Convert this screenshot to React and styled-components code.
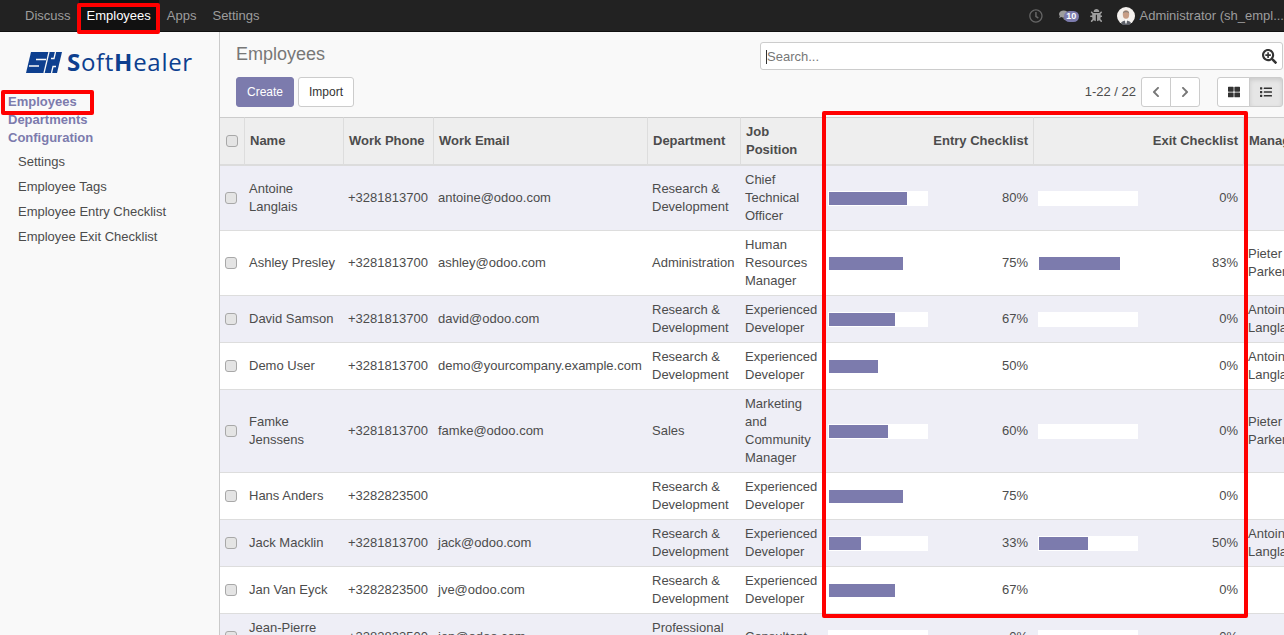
import React from 'react'
import styled, { createGlobalStyle } from 'styled-components'
import { FaRegClock, FaComments, FaBug, FaSearchPlus, FaChevronLeft, FaChevronRight, FaThLarge, FaList } from 'react-icons/fa'

const employees = [
  { name: 'Antoine Langlais', phone: '+3281813700', email: 'antoine@odoo.com', dept: 'Research & Development', job: 'Chief Technical Officer', entry: 80, exit: 0, manager: '' },
  { name: 'Ashley Presley', phone: '+3281813700', email: 'ashley@odoo.com', dept: 'Administration', job: 'Human Resources Manager', entry: 75, exit: 83, manager: 'Pieter Parker' },
  { name: 'David Samson', phone: '+3281813700', email: 'david@odoo.com', dept: 'Research & Development', job: 'Experienced Developer', entry: 67, exit: 0, manager: 'Antoine Langlais' },
  { name: 'Demo User', phone: '+3281813700', email: 'demo@yourcompany.example.com', dept: 'Research & Development', job: 'Experienced Developer', entry: 50, exit: 0, manager: 'Antoine Langlais' },
  { name: 'Famke Jenssens', phone: '+3281813700', email: 'famke@odoo.com', dept: 'Sales', job: 'Marketing and Community Manager', entry: 60, exit: 0, manager: 'Pieter Parker' },
  { name: 'Hans Anders', phone: '+3282823500', email: '', dept: 'Research & Development', job: 'Experienced Developer', entry: 75, exit: 0, manager: '' },
  { name: 'Jack Macklin', phone: '+3281813700', email: 'jack@odoo.com', dept: 'Research & Development', job: 'Experienced Developer', entry: 33, exit: 50, manager: 'Antoine Langlais' },
  { name: 'Jan Van Eyck', phone: '+3282823500', email: 'jve@odoo.com', dept: 'Research & Development', job: 'Experienced Developer', entry: 67, exit: 0, manager: '' },
  { name: 'Jean-Pierre Carnaud', phone: '+3282823500', email: 'jep@odoo.com', dept: 'Professional Services', job: 'Consultant', entry: 0, exit: 0, manager: '' },
]

const columns = [25, 99, 90, 214, 93, 83, 210, 210, 72]

const GlobalStyle = createGlobalStyle`
  html, body {
    margin: 0;
    height: 100%;
    overflow: hidden;
    background: #fff;
  }
  body {
    font-family: "Liberation Sans", Arial, sans-serif;
    font-size: 13px;
    line-height: 18px;
    color: #4c4c4c;
  }
`

const Page = styled.div`
  position: relative;
  width: 1284px;
  height: 635px;
  overflow: hidden;
  display: flex;
  flex-direction: column;
`

const TopBar = styled.nav`
  flex: 0 0 32px;
  height: 32px;
  box-sizing: border-box;
  background: #222;
  border-bottom: 1px solid #111;
  display: flex;
  justify-content: space-between;
  align-items: stretch;
  padding-left: 17px;
`

const TopMenu = styled.div`
  display: flex;
`

const TopLink = styled.a`
  display: flex;
  align-items: center;
  padding: 0 8px;
  color: ${p => (p.$active ? '#fff' : '#9d9d9d')};
  background: ${p => (p.$active ? '#111' : 'transparent')};
`

const Systray = styled.div`
  display: flex;
  align-items: center;
  color: #9d9d9d;
  width: 255px;
  flex: 0 0 255px;
  white-space: nowrap;
  overflow: hidden;
`

const ClockIcon = styled(FaRegClock)`
  font-size: 14px;
  color: #666;
`

const ChatWrap = styled.span`
  position: relative;
  display: inline-flex;
  width: 20px;
  height: 14px;
  margin-left: 16px;
  font-size: 13px;
  color: #9d9d9d;
`

const ChatBadge = styled.span`
  position: absolute;
  left: 5px;
  top: 2px;
  width: 15px;
  height: 11px;
  border-radius: 6px;
  background: #7c7bad;
  color: #fff;
  font-size: 9px;
  line-height: 11px;
  font-weight: bold;
  text-align: center;
`

const BugIcon = styled(FaBug)`
  font-size: 13px;
  margin-left: 11px;
  color: #9d9d9d;
`

const Avatar = styled.svg`
  width: 18px;
  height: 18px;
  margin-left: 15px;
  flex: none;
`

const UserName = styled.span`
  margin-left: 4px;
`

const Body = styled.div`
  flex: 1;
  min-height: 0;
  display: flex;
`

const Sidebar = styled.aside`
  flex: 0 0 220px;
  box-sizing: border-box;
  background: #f9f9f9;
  border-right: 1px solid #cacaca;
`

const Logo = styled.div`
  display: flex;
  align-items: center;
  height: 60px;
  padding-left: 26px;
  box-sizing: border-box;
`

const LogoWord = styled.span`
  font-family: "Open Sans", sans-serif;
  font-size: 24px;
  line-height: 30px;
  letter-spacing: 0.7px;
  color: #0d3f8f;
  margin-left: 5px;

  b {
    font-weight: 700;
  }
`

const MenuHeading = styled.div`
  padding-left: 8px;
  font-weight: bold;
  color: #7c7bad;
`

const MenuGroup = styled.div`
  padding-top: 1px;
`

const SubMenu = styled.div`
  margin-top: 2px;
`

const SubLink = styled.div`
  padding: 4px 0 3px 18px;
  color: #4c4c4c;
`

const Main = styled.main`
  flex: 1;
  min-width: 0;
  display: flex;
  flex-direction: column;
`

const ControlPanel = styled.div`
  flex: 0 0 85px;
  height: 85px;
  box-sizing: border-box;
  background: #f9f9f9;
  padding: 10px 16px 0;
  display: grid;
  grid-template-columns: 1fr 524px;
  grid-template-rows: 35px 30px;
`

const Title = styled.h1`
  margin: 0;
  font-size: 18px;
  font-weight: normal;
  line-height: 24px;
  color: #777;
`

const SearchBox = styled.div`
  margin: 0 -15px 0 16px;
  height: 28px;
  box-sizing: border-box;
  background: #fff;
  border: 1px solid #ccc;
  border-radius: 3px;
  display: flex;
  align-items: center;
  padding: 1px 5px 0 5px;
  color: #777;
`

const SearchText = styled.span`
  flex: 1;
  border-left: 1px solid #333;
  line-height: 14px;
`

const SearchIcon = styled(FaSearchPlus)`
  font-size: 15px;
  color: #333;
`

const Actions = styled.div`
  display: flex;
  gap: 4px;
`

const Button = styled.button`
  height: 30px;
  box-sizing: border-box;
  padding: 0 10px;
  font: inherit;
  font-size: 12px;
  border-radius: 3px;
  border: 1px solid ${p => (p.$primary ? '#7c7bad' : '#ccc')};
  background: ${p => (p.$primary ? '#7c7bad' : '#fff')};
  color: ${p => (p.$primary ? '#fff' : '#333')};
`

const Pager = styled.div`
  display: flex;
  align-items: flex-start;
  justify-content: flex-end;
  margin-right: -15px;
`

const PagerText = styled.span`
  line-height: 30px;
  margin-right: 6px;
  color: #4c4c4c;
`

const ButtonGroup = styled.div`
  display: flex;
  margin-left: ${p => p.$gap || 0}px;
`

const IconButton = styled.button`
  width: ${p => p.$w}px;
  height: 30px;
  box-sizing: border-box;
  padding: 0;
  display: flex;
  align-items: center;
  justify-content: center;
  border: 1px solid #ccc;
  margin-left: -1px;
  font-size: 12px;
  color: ${p => p.$icon || '#333'};
  background: ${p => (p.$active ? '#e6e6e6' : '#fff')};
  box-shadow: ${p => (p.$active ? 'inset 0 2px 4px rgba(0,0,0,.12)' : 'none')};

  &:first-child {
    border-radius: 3px 0 0 3px;
  }
  &:last-child {
    border-radius: 0 3px 3px 0;
  }
`

const TableWrap = styled.div`
  flex: 1;
  min-height: 0;
  overflow: hidden;
  background: #fff;
`

const Table = styled.table`
  width: 1096px;
  table-layout: fixed;
  border-collapse: separate;
  border-spacing: 0;
`

const Head = styled.th`
  height: 49px;
  box-sizing: border-box;
  background: #eee;
  border-top: 1px solid #ccc;
  border-bottom: 2px solid #dcdcdc;
  border-right: 1px solid #ddd;
  padding: 4px 5px 5px;
  font-weight: bold;
  color: #4c4c4c;
  text-align: ${p => (p.$right ? 'right' : 'left')};
  overflow: hidden;
  white-space: ${p => (p.$nowrap ? 'nowrap' : 'normal')};
`

const Row = styled.tr`
  background: ${p => (p.$odd ? '#eeeef6' : '#fff')};
`

const Cell = styled.td`
  padding: 5px ${p => p.$pr || 5}px 5px 4px;
  border-bottom: 1px solid #ddd;
  vertical-align: middle;
  white-space: ${p => (p.$nowrap ? 'nowrap' : 'normal')};
`

const CheckCell = styled(Cell)`
  padding: 0 0 0 5px;
`

const Check = styled.span`
  display: block;
  box-sizing: border-box;
  width: 12px;
  height: 12px;
  background: #e4e4e4;
  border: 1px solid #a8a8a8;
  border-radius: 3px;
`

const HeadCheck = styled(Check)`
  margin-left: 1px;
`

const ProgressRow = styled.div`
  display: flex;
  align-items: center;
  justify-content: space-between;
`

const Track = styled.div`
  width: 100px;
  height: 15px;
  background: #fff;
  padding: 1px;
  box-sizing: border-box;
`

const Fill = styled.div`
  height: 13px;
  background: #7c7bad;
`

const Marker = styled.div`
  position: absolute;
  box-sizing: border-box;
  border: 4px solid #f00;
  border-radius: 2px;
  pointer-events: none;
`

const MenuMarker = styled(Marker)`
  left: 77px;
  top: 3px;
  width: 83px;
  height: 31px;
`

const SideMarker = styled(Marker)`
  left: 1px;
  top: 90px;
  width: 93px;
  height: 25px;
`

const ColumnMarker = styled(Marker)`
  left: 822px;
  top: 111px;
  width: 426px;
  height: 507px;
`

function Progress({ value }) {
  return (
    <ProgressRow>
      <Track>
        <Fill style={{ width: `${value}%` }} />
      </Track>
      <span>{value}%</span>
    </ProgressRow>
  )
}

function LogoMark() {
  return (
    <svg width="36" height="21" viewBox="0 0 36 21">
      <path d="M5 0H36L31 21H0Z" fill="#0d3f8f" />
      <path d="M10 7.500H20M3 14H13M23 0L18 21M29.500 0L28 6.500H25M25.500 21L27 14.500H30" stroke="#f9f9f9" strokeWidth="1.300" fill="none" />
    </svg>
  )
}

function AvatarPic() {
  return (
    <Avatar viewBox="0 0 18 18">
      <circle cx="9" cy="9" r="9" fill="#f4f1ee" />
      <ellipse cx="9" cy="7.500" rx="3.200" ry="4.200" fill="#c79d85" />
      <path d="M5.800 6.500C5.800 2.800 12.200 2.800 12.200 6.500 11 4.800 7 4.800 5.800 6.500Z" fill="#8a8078" />
      <path d="M4 16c1-3.500 9-3.500 10 0l-2 2H6Z" fill="#5d6068" />
      <path d="M8 12.500h2l-.4 4h-1.200Z" fill="#fff" />
    </Avatar>
  )
}

export default function App() {
  return (
    <Page>
      <GlobalStyle />
      <TopBar>
        <TopMenu>
          <TopLink>Discuss</TopLink>
          <TopLink $active>Employees</TopLink>
          <TopLink>Apps</TopLink>
          <TopLink>Settings</TopLink>
        </TopMenu>
        <Systray>
          <ClockIcon />
          <ChatWrap>
            <FaComments />
            <ChatBadge>10</ChatBadge>
          </ChatWrap>
          <BugIcon />
          <AvatarPic />
          <UserName>Administrator (sh_empl...</UserName>
        </Systray>
      </TopBar>
      <Body>
        <Sidebar>
          <Logo>
            <LogoMark />
            <LogoWord><b>S</b>oft<b>H</b>ealer</LogoWord>
          </Logo>
          <MenuGroup>
            <MenuHeading>Employees</MenuHeading>
            <MenuHeading>Departments</MenuHeading>
            <MenuHeading>Configuration</MenuHeading>
          </MenuGroup>
          <SubMenu>
            <SubLink>Settings</SubLink>
            <SubLink>Employee Tags</SubLink>
            <SubLink>Employee Entry Checklist</SubLink>
            <SubLink>Employee Exit Checklist</SubLink>
          </SubMenu>
        </Sidebar>
        <Main>
          <ControlPanel>
            <Title>Employees</Title>
            <SearchBox>
              <SearchText>Search...</SearchText>
              <SearchIcon />
            </SearchBox>
            <Actions>
              <Button $primary>Create</Button>
              <Button>Import</Button>
            </Actions>
            <Pager>
              <PagerText>1-22 / 22</PagerText>
              <ButtonGroup>
                <IconButton $w={30} $icon="#777"><FaChevronLeft /></IconButton>
                <IconButton $w={30} $icon="#777"><FaChevronRight /></IconButton>
              </ButtonGroup>
              <ButtonGroup $gap={18}>
                <IconButton $w={33}><FaThLarge /></IconButton>
                <IconButton $w={34} $active><FaList /></IconButton>
              </ButtonGroup>
            </Pager>
          </ControlPanel>
          <TableWrap>
            <Table>
              <colgroup>
                {columns.map((w, i) => <col key={i} style={{ width: w }} />)}
              </colgroup>
              <thead>
                <tr>
                  <Head><HeadCheck /></Head>
                  <Head>Name</Head>
                  <Head $nowrap>Work Phone</Head>
                  <Head>Work Email</Head>
                  <Head>Department</Head>
                  <Head>Job Position</Head>
                  <Head $right>Entry Checklist</Head>
                  <Head $right>Exit Checklist</Head>
                  <Head $nowrap>Manager</Head>
                </tr>
              </thead>
              <tbody>
                {employees.map((e, i) => (
                  <Row key={e.name} $odd={i % 2 === 0}>
                    <CheckCell><Check /></CheckCell>
                    <Cell>{e.name}</Cell>
                    <Cell $nowrap>{e.phone}</Cell>
                    <Cell $nowrap>{e.email}</Cell>
                    <Cell>{e.dept}</Cell>
                    <Cell>{e.job}</Cell>
                    <Cell $pr={6}><Progress value={e.entry} /></Cell>
                    <Cell $pr={6}><Progress value={e.exit} /></Cell>
                    <Cell>{e.manager}</Cell>
                  </Row>
                ))}
              </tbody>
            </Table>
          </TableWrap>
        </Main>
      </Body>
      <MenuMarker />
      <SideMarker />
      <ColumnMarker />
    </Page>
  )
}
